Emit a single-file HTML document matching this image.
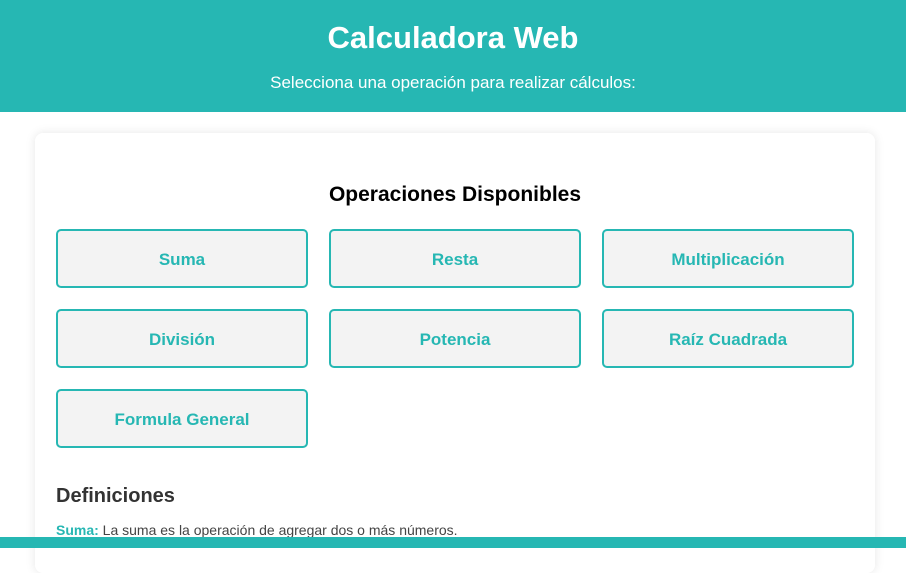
<!DOCTYPE html>
<html><head><meta charset="utf-8"><style>
*{box-sizing:border-box;margin:0;padding:0}
body{width:906px;height:548px;overflow:hidden;background:#fff;font-family:"Liberation Sans",sans-serif;position:relative}
.hdr{position:absolute;left:0;top:0;width:906px;height:112px;background:#26b7b3;color:#fff;text-align:center}
.hdr h1{position:absolute;left:0;right:0;top:18px;font-size:31px;font-weight:bold;line-height:40px}
.hdr p{position:absolute;left:0;right:0;top:71px;font-size:17px;line-height:24px}
.card{position:absolute;left:35px;top:133px;width:840px;height:440px;background:#fff;border-radius:8px;box-shadow:0 0 10px rgba(0,0,0,0.1)}
.card h2{position:absolute;left:0;right:0;top:48px;text-align:center;font-size:21px;line-height:28px;color:#000}
.b{position:absolute;width:252px;height:59px;border:2px solid #26b7b3;border-radius:5px;background:#f3f3f3;color:#26b7b3;font-weight:bold;font-size:17px;display:flex;align-items:center;justify-content:center;padding-top:3px}
.d{position:absolute;left:21px;top:352px;font-size:20px;font-weight:bold;color:#333}
.s{position:absolute;left:21px;top:389px;font-size:14px;color:#444}
.s b{color:#26b7b3}
.bot{position:absolute;left:0;top:537px;width:906px;height:11px;background:#26b7b3}
</style></head><body>
<div class="hdr"><h1>Calculadora Web</h1><p>Selecciona una operación para realizar cálculos:</p></div>
<div class="card">
<h2>Operaciones Disponibles</h2>
<div class="b" style="left:21px;top:96px">Suma</div>
<div class="b" style="left:294px;top:96px">Resta</div>
<div class="b" style="left:567px;top:96px">Multiplicación</div>
<div class="b" style="left:21px;top:176px">División</div>
<div class="b" style="left:294px;top:176px">Potencia</div>
<div class="b" style="left:567px;top:176px">Raíz Cuadrada</div>
<div class="b" style="left:21px;top:256px">Formula General</div>
<div class="d">Definiciones</div>
<div class="s"><b>Suma:</b> La suma es la operación de agregar dos o más números.</div>
</div>
<div class="bot"></div>
</body></html>
